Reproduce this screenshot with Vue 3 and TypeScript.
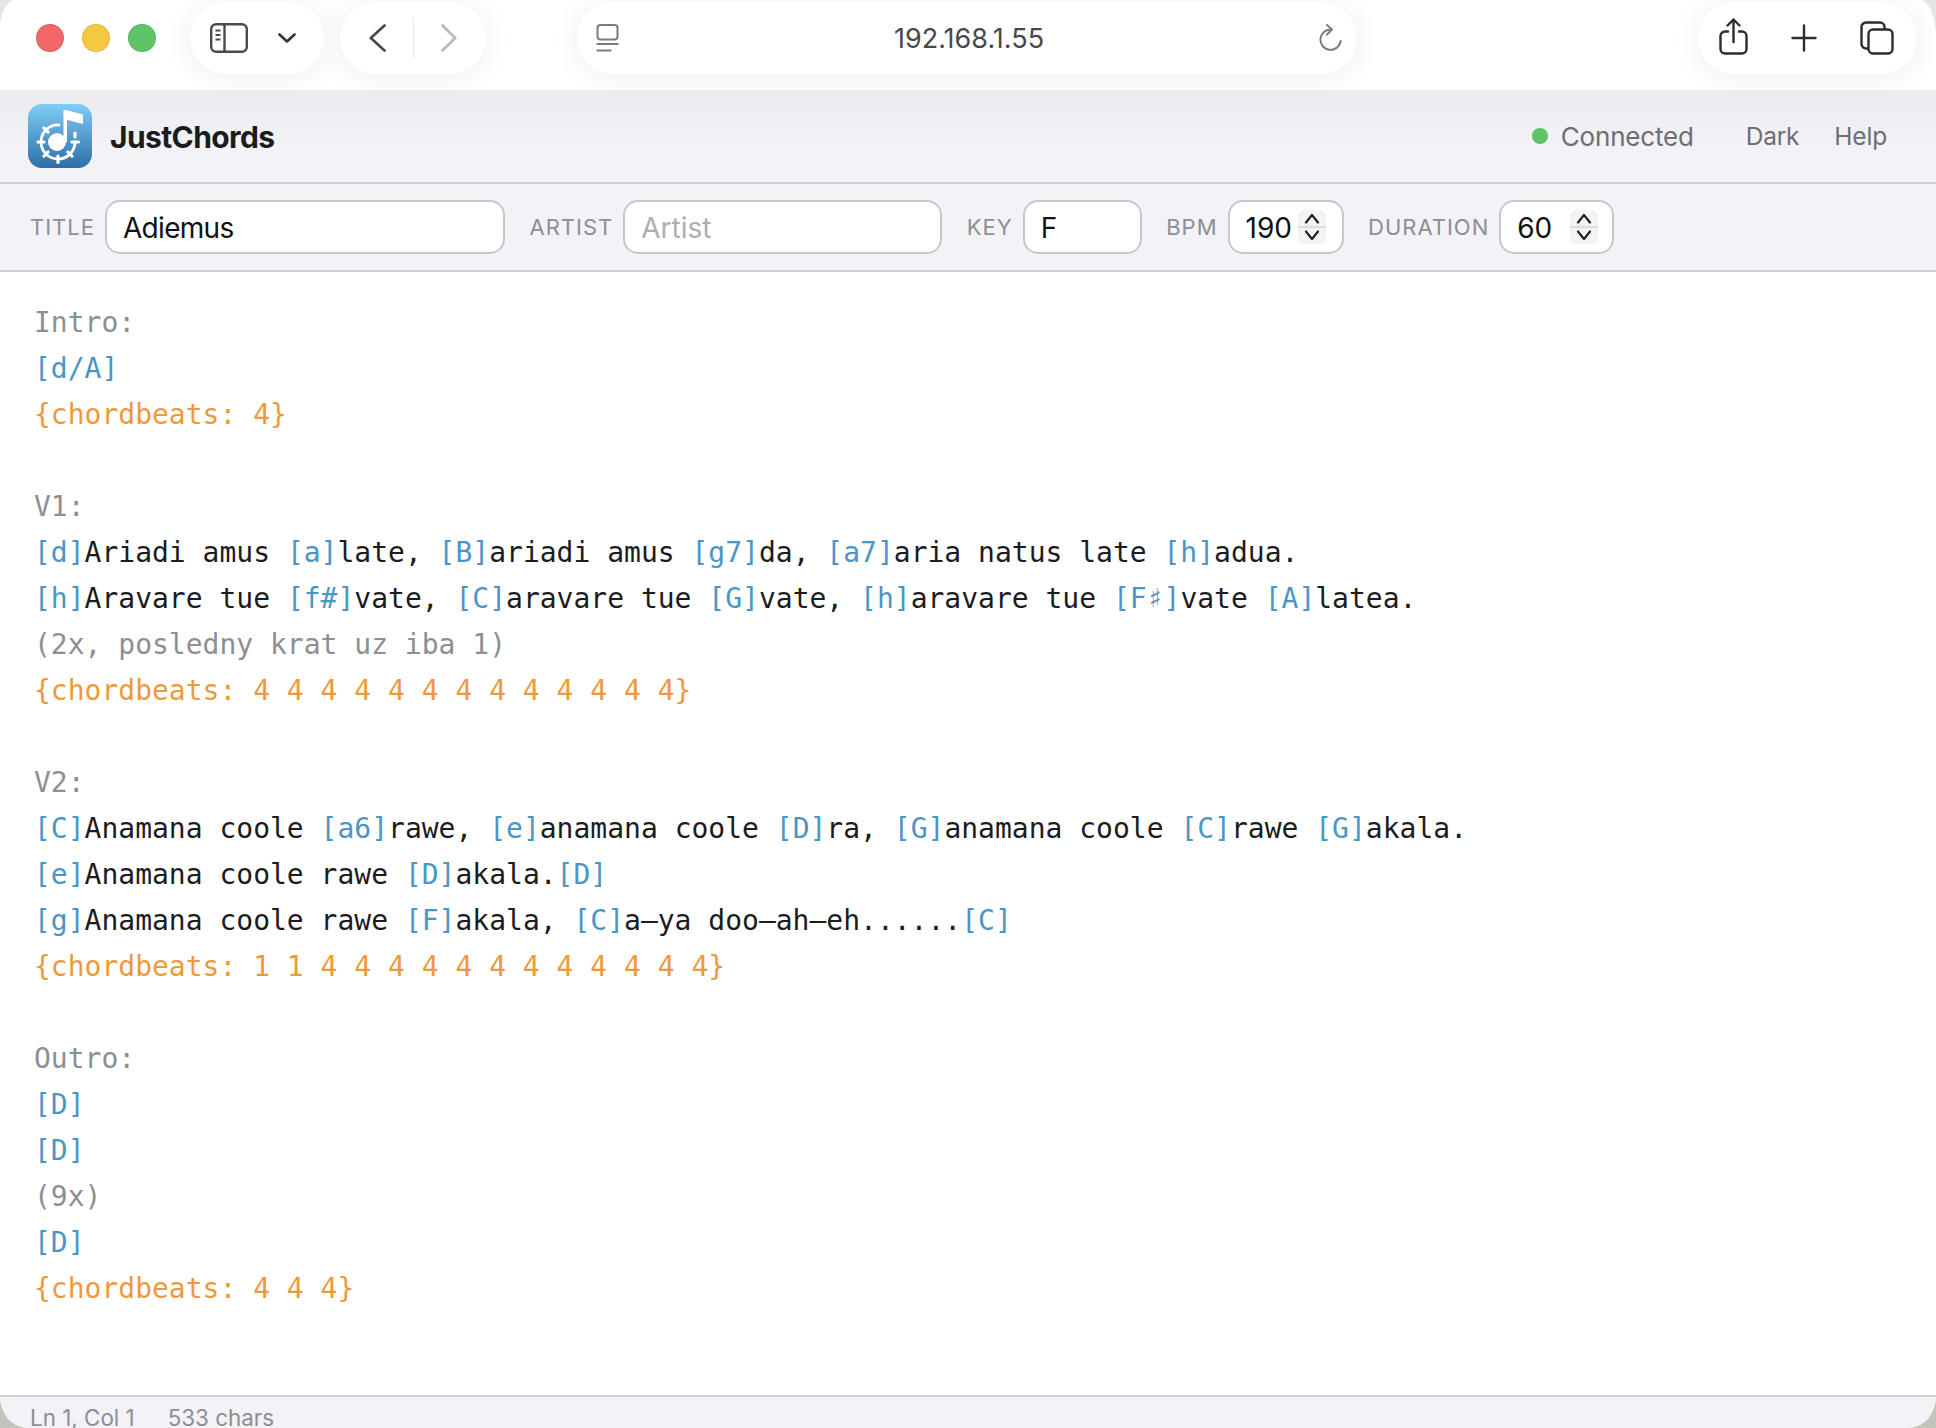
<template>
  <div class="window">
    <div class="browser-bar">
      <div class="traffic">
        <span class="light red"></span>
        <span class="light yellow"></span>
        <span class="light green"></span>
      </div>

      <div class="pill sidebar-pill">
        <svg width="38" height="30" viewBox="0 0 38 30" fill="none" stroke="#4a4a4c" stroke-width="2.4">
          <rect x="1.2" y="1.2" width="35.6" height="27.6" rx="5" />
          <path d="M14.5 1.2v27.6" />
          <path d="M5.5 7.5h5M5.5 12h5M5.5 16.5h5" stroke-width="1.8" />
        </svg>
        <svg width="18" height="10" viewBox="0 0 18 10" fill="none" stroke="#333" stroke-width="2.6" stroke-linecap="round" stroke-linejoin="round">
          <path d="M1.5 1.5 9 8.5l7.5-7" />
        </svg>
      </div>

      <div class="pill nav-pill">
        <svg width="17" height="28" viewBox="0 0 17 28" fill="none" stroke="#48484a" stroke-width="2.6" stroke-linecap="round" stroke-linejoin="round">
          <path d="M15.5 1.5 1.8 14l13.7 12.5" />
        </svg>
        <span class="nav-divider"></span>
        <svg width="16" height="28" viewBox="0 0 16 28" fill="none" stroke="#b9b9bb" stroke-width="2.6" stroke-linecap="round" stroke-linejoin="round">
          <path d="M1.5 1.5 14.2 14 1.5 26.5" />
        </svg>
      </div>

      <div class="pill address-pill">
        <svg width="23" height="28" viewBox="0 0 23 28" fill="none" stroke="#7c7c80" stroke-width="2">
          <rect x="1.5" y="1" width="20" height="14.5" rx="3" />
          <path d="M0.5 20h22M0.5 26.5h15" />
        </svg>
        <span class="address">192.168.1.55</span>
        <svg width="23" height="28" viewBox="0 0 23 28" fill="none" stroke="#7c7c80" stroke-width="2" stroke-linecap="round" stroke-linejoin="round">
          <path d="M11.5 5.5a10.2 10.2 0 1 0 10.2 11.5" />
          <path d="M8 1 13 5.5 8 10.5" />
        </svg>
      </div>

      <div class="pill actions-pill">
        <svg class="share-icon" width="29" height="37" viewBox="0 0 29 37" fill="none" stroke="#2c2c2e" stroke-width="2.4" stroke-linecap="round" stroke-linejoin="round">
          <path d="M9 13.5H6a4.5 4.5 0 0 0-4.5 4.5v13A4.5 4.5 0 0 0 6 35.500h17a4.500 4.500 0 0 0 4.500-4.500V18a4.500 4.500 0 0 0-4.500-4.500h-3" />
          <path d="M14.500 24V1.500M8.500 7.500l6-6 6 6" />
        </svg>
        <svg width="26" height="28" viewBox="0 0 26 28" fill="none" stroke="#2c2c2e" stroke-width="2.4" stroke-linecap="round">
          <path d="M13 1.500v25M1.500 14h23" />
        </svg>
        <svg width="34" height="34" viewBox="0 0 34 34" fill="none" stroke="#2c2c2e" stroke-width="2.400">
          <path d="M8 27.500H6A4.500 4.500 0 0 1 1.500 23V6A4.500 4.500 0 0 1 6 1.500h14A4.500 4.500 0 0 1 24.500 6v2" />
          <rect x="8.500" y="8.500" width="24" height="24" rx="4.500" />
        </svg>
      </div>
    </div>

    <header class="app-header">
      <div class="brand">
        <svg class="logo" width="64" height="64" viewBox="0 0 64 64">
          <defs>
            <linearGradient id="logo-bg" x1="0" y1="0" x2="0" y2="1">
              <stop offset="0" stop-color="#7fcdf8" />
              <stop offset="1" stop-color="#2d6ea6" />
            </linearGradient>
          </defs>
          <rect width="64" height="64" rx="14" fill="url(#logo-bg)" />
          <circle cx="29" cy="38" r="9" fill="#fff" />
          <path d="M35.500 38V6h3.500v32z" fill="#fff" />
          <path d="M38 6 55 10.500V20L38 15.500z" fill="#fff" />
          <g fill="none" stroke="#fff" stroke-linecap="round">
            <path d="M31 21A17 17 0 1 0 47 38" stroke-width="2.800" />
            <path d="M30 52v6.500M10 38h6M44 38h6.500M20.100 47.900l-4.200 4.200M39.900 47.900l4.200 4.200M20.100 28.100l-4.200-4.200M47 29v4" stroke-width="3.200" />
          </g>
        </svg>
        <span class="brand-name">JustChords</span>
      </div>
      <div class="header-right">
        <span class="status-dot"></span>
        <span class="status-text">Connected</span>
        <span class="header-link dark">Dark</span>
        <span class="header-link help">Help</span>
      </div>
    </header>

    <div class="meta-bar">
      <div v-for="field in fields" :key="field.label" class="meta-field">
        <label>{{ field.label }}</label>
        <div class="input-box" :class="field.cls">
          <input type="text" :value="field.value" :placeholder="field.placeholder" readonly />
          <span v-if="field.stepper" class="stepper">
            <svg width="16" height="30" viewBox="0 0 16 30" fill="none" stroke="#222" stroke-width="2.200" stroke-linecap="round" stroke-linejoin="round">
              <path d="M2 10.500 8 3l6 7.500" />
              <path d="M2 19.500 8 27l6-7.500" />
            </svg>
          </span>
        </div>
      </div>
    </div>

    <main class="editor">
      <div v-for="(line, i) in lines" :key="i" class="line">
        <span v-for="(seg, j) in line" :key="j" :class="seg.kind">{{ seg.text }}</span>
      </div>
    </main>

    <footer class="status-bar">
      <span>Ln 1, Col 1</span>
      <span>533 chars</span>
    </footer>
  </div>
</template>

<script setup lang="ts">
interface Field {
  label: string
  value: string
  placeholder?: string
  cls: string
  stepper?: boolean
}

interface Segment {
  text: string
  kind: 'chord' | 'directive' | 'comment' | 'lyric'
}

const fields: Field[] = [
  { label: 'TITLE', value: 'Adiemus', cls: 'w-title' },
  { label: 'ARTIST', value: '', placeholder: 'Artist', cls: 'w-artist' },
  { label: 'KEY', value: 'F', cls: 'w-key' },
  { label: 'BPM', value: '190', cls: 'w-bpm', stepper: true },
  { label: 'DURATION', value: '60', cls: 'w-duration', stepper: true },
]

const source = `Intro:
[d/A]
{chordbeats: 4}

V1:
[d]Ariadi amus [a]late, [B]ariadi amus [g7]da, [a7]aria natus late [h]adua.
[h]Aravare tue [f#]vate, [C]aravare tue [G]vate, [h]aravare tue [F♯]vate [A]latea.
(2x, posledny krat uz iba 1)
{chordbeats: 4 4 4 4 4 4 4 4 4 4 4 4 4}

V2:
[C]Anamana coole [a6]rawe, [e]anamana coole [D]ra, [G]anamana coole [C]rawe [G]akala.
[e]Anamana coole rawe [D]akala.[D]
[g]Anamana coole rawe [F]akala, [C]a–ya doo–ah–eh......[C]
{chordbeats: 1 1 4 4 4 4 4 4 4 4 4 4 4 4}

Outro:
[D]
[D]
(9x)
[D]
{chordbeats: 4 4 4}`

function parseLine(line: string): Segment[] {
  if (line.startsWith('{')) return [{ text: line, kind: 'directive' }]
  if (line.startsWith('(') || line.endsWith(':')) return [{ text: line, kind: 'comment' }]
  return line
    .split(/(\[[^\]]*\])/)
    .filter((part) => part !== '')
    .map((part) => ({ text: part, kind: part.startsWith('[') ? 'chord' : 'lyric' }))
}

const lines = source.split('\n').map(parseLine)
</script>

<style scoped>
.window {
  height: 100vh;
  display: flex;
  flex-direction: column;
  overflow: hidden;
  background: #fff;
  border-radius: 16px 16px 28px 28px / 30px 40px 32px 32px;
  font-family: Inter, "Liberation Sans", sans-serif;
}

/* safari chrome */
.browser-bar {
  flex: none;
  height: 90px;
  box-sizing: border-box;
  display: flex;
  align-items: center;
  padding: 2px 19px 16px 36px;
  background: #fff;
}

.traffic {
  display: flex;
  gap: 18px;
}

.light {
  width: 28px;
  height: 28px;
  border-radius: 50%;
  box-sizing: border-box;
  border: 1px solid rgba(0, 0, 0, 0.08);
}

.red {
  background: #f0686a;
}

.yellow {
  background: #f5c842;
}

.green {
  background: #5fc466;
}

.pill {
  height: 72px;
  box-sizing: border-box;
  display: flex;
  align-items: center;
  background: #fff;
  border-radius: 36px;
  box-shadow: 0 2px 30px rgba(0, 0, 0, 0.07);
}

.sidebar-pill {
  width: 134px;
  margin-left: 34px;
  padding-left: 20px;
  gap: 30px;
}

.nav-pill {
  width: 146px;
  margin-left: 16px;
  padding-left: 29px;
  gap: 27px;
}

.nav-divider {
  width: 1px;
  height: 39px;
  background: #e6e6e8;
}

.address-pill {
  width: 780px;
  margin-left: 91px;
  padding: 0 15px 0 19px;
}

.address {
  flex: 1;
  text-align: center;
  font-size: 27px;
  color: #48484a;
}

.actions-pill {
  width: 219px;
  margin-left: auto;
  padding-left: 21px;
  gap: 43px;
}

.share-icon {
  margin-top: -3px;
}

/* app header */
.app-header {
  flex: none;
  height: 92px;
  box-sizing: border-box;
  display: flex;
  align-items: center;
  justify-content: space-between;
  padding: 0 49px 0 28px;
  background: linear-gradient(#ebebf0, #f2f2f7 60px);
}

.brand {
  display: flex;
  align-items: center;
  gap: 18px;
}

.logo {
  display: block;
}

.brand-name {
  padding-top: 2px;
  font-size: 30px;
  font-weight: 700;
  letter-spacing: -0.6px;
  color: #1c1c1e;
}

.header-right {
  display: flex;
  align-items: center;
  color: #6e6e73;
}

.status-dot {
  width: 16px;
  height: 16px;
  margin-right: 13px;
  border-radius: 50%;
  background: #5fc466;
}

.status-text {
  font-size: 26px;
  letter-spacing: -0.2px;
}

.header-link {
  font-size: 24.500px;
  letter-spacing: -0.2px;
}

.dark {
  margin-left: 52px;
}

.help {
  margin-left: 35px;
}

/* song metadata */
.meta-bar {
  flex: none;
  height: 90px;
  box-sizing: border-box;
  display: flex;
  align-items: center;
  gap: 24.500px;
  padding: 0 30px;
  background: #f2f2f7;
  border-top: 2px solid #d1d1d6;
  border-bottom: 2px solid #d1d1d6;
}

.meta-field {
  display: flex;
  align-items: center;
  gap: 10px;
}

.meta-field label {
  font-size: 22px;
  letter-spacing: 1px;
  color: #8e8e93;
}

.input-box {
  height: 54px;
  box-sizing: border-box;
  display: flex;
  align-items: center;
  padding-right: 14px;
  background: #fff;
  border: 2px solid #c7c7cc;
  border-radius: 15px;
}

.input-box input {
  flex: 1;
  min-width: 0;
  height: 100%;
  box-sizing: border-box;
  padding: 2px 0 0 16px;
  border: 0;
  outline: 0;
  background: transparent;
  font: inherit;
  font-size: 28px;
  color: #111;
}

.input-box input::placeholder {
  color: #aeaeb2;
}

.w-title {
  width: 400px;
}

.w-title input {
  letter-spacing: -0.7px;
}

.w-artist {
  width: 319px;
}

.w-key {
  width: 119px;
}

.w-bpm {
  width: 116px;
  padding-right: 16px;
}

.w-duration {
  width: 115px;
  padding-right: 14px;
}

.stepper {
  flex: none;
  width: 28px;
  height: 34px;
  display: flex;
  align-items: center;
  justify-content: center;
  border-radius: 6px;
  background: linear-gradient(transparent 16px, #dcdcdc 16px, #dcdcdc 18px, transparent 18px), #f3f3f3;
}

.stepper svg {
  display: block;
}

/* chord sheet */
.editor {
  flex: 1;
  min-height: 0;
  box-sizing: border-box;
  padding: 28px 34px 0;
  background: #fff;
  font-family: "DejaVu Sans Mono", "Liberation Mono", monospace;
  font-size: 28px;
  line-height: 46px;
  white-space: pre;
}

.line {
  height: 46px;
}

.lyric {
  color: #1c1c1e;
}

.chord {
  color: #4a96c6;
}

.directive {
  color: #ee9a3c;
}

.comment {
  color: #8e8e93;
}

.status-bar {
  flex: none;
  height: 33px;
  box-sizing: border-box;
  display: flex;
  gap: 33px;
  padding: 6px 30px 0;
  background: #f2f2f7;
  border-top: 2px solid #d1d1d6;
  font-size: 22.400px;
  line-height: 30px;
  color: #8e8e93;
}
</style>

<style>
html,
body {
  margin: 0;
  overflow: hidden;
  background: linear-gradient(#e6e6e6, #c2c5bb);
}
</style>
